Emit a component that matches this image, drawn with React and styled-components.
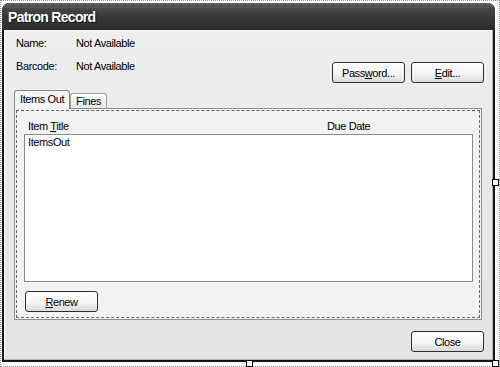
import styled, { createGlobalStyle } from "styled-components";

const GlobalStyle = createGlobalStyle`
  html, body {
    margin: 0;
    padding: 0;
    background: #ffffff;
  }
  body {
    font-family: "Liberation Sans", Arial, sans-serif;
  }
`;

const App = () => {
  return (
    <>
      <GlobalStyle />
      <Page>
        <Window>
          <TitleBar>Patron Record</TitleBar>
          <Client>
            <InfoBar>
              <Fields>
                <Text>Name:</Text>
                <Text>Not Available</Text>
                <Text>Barcode:</Text>
                <Text>Not Available</Text>
              </Fields>
              <ButtonGroup>
                <Button>
                  Pass<Key>w</Key>ord...
                </Button>
                <Button>
                  <Key>E</Key>dit...
                </Button>
              </ButtonGroup>
            </InfoBar>

            <Tabs>
              <TabStrip>
                <Tab $active>Items Out</Tab>
                <Tab>Fines</Tab>
              </TabStrip>
              <TabPanel>
                <FocusBox>
                  <ColumnHeads>
                    <Text>
                      Item <Key>T</Key>itle
                    </Text>
                    <Text>Due Date</Text>
                  </ColumnHeads>
                  <ListBox>
                    <ListItem>ItemsOut</ListItem>
                  </ListBox>
                  <RenewRow>
                    <Button>
                      <Key>R</Key>enew
                    </Button>
                  </RenewRow>
                </FocusBox>
              </TabPanel>
            </Tabs>

            <Footer>
              <Button>Close</Button>
            </Footer>
          </Client>
        </Window>

        <Handle $x={491} $y={178} />
        <Handle $x={245} $y={359} />
        <Handle $x={491} $y={359} />
      </Page>
    </>
  );
};

export default App;

const Page = styled.div`
  position: relative;
  box-sizing: border-box;
  width: 500px;
  height: 367px;
  border: 1px dotted #8c8c8c;
  padding: 2px 4px 4px 1px;
  display: flex;
`;

const Window = styled.div`
  flex: 1;
  display: flex;
  flex-direction: column;
  background: #151515;
  border-radius: 7px 7px 0 0;
  overflow: hidden;
`;

const TitleBar = styled.div`
  height: 27px;
  flex-shrink: 0;
  display: flex;
  align-items: center;
  padding-left: 6px;
  background: linear-gradient(to bottom, #626262 0%, #444444 25%, #363636 60%, #2b2b2b 100%);
  color: #ffffff;
  font-size: 14px;
  font-weight: bold;
  letter-spacing: -0.7px;
  text-shadow: 1px 1px 0 #111;
`;

const Client = styled.div`
  flex: 1;
  display: flex;
  flex-direction: column;
  margin: 0 2px 2px 2px;
  border: 1px solid;
  border-color: #f7f7f7 #b4b4b4 #b4b4b4 #f7f7f7;
  background: linear-gradient(to bottom, #eeeeee, #e3e3e3);
`;

const Text = styled.span`
  font-size: 11px;
  line-height: 13px;
  letter-spacing: -0.4px;
  color: #000;
  white-space: nowrap;
`;

const Key = styled.span`
  text-decoration: underline;
`;

const InfoBar = styled.div`
  display: flex;
  justify-content: space-between;
  align-items: flex-start;
  padding: 6px 8px 0 11px;
`;

const Fields = styled.div`
  display: grid;
  grid-template-columns: 60px auto;
  row-gap: 10px;
`;

const ButtonGroup = styled.div`
  display: flex;
  gap: 6px;
  margin-top: 25px;
`;

const Button = styled.button`
  box-sizing: border-box;
  width: 73px;
  height: 21px;
  padding: 0;
  border: 1px solid #2e2e2e;
  border-radius: 3px;
  background: linear-gradient(to bottom, #ffffff 0%, #f4f4f4 55%, #dadada 100%);
  font-family: "Liberation Sans", Arial, sans-serif;
  font-size: 11px;
  letter-spacing: -0.4px;
  color: #000;
`;

const Tabs = styled.div`
  flex: 1;
  display: flex;
  flex-direction: column;
  margin: 7px 10px 0 9px;
`;

const TabStrip = styled.div`
  display: flex;
  align-items: flex-end;
  height: 18px;
`;

const Tab = styled.div`
  position: relative;
  z-index: ${(p) => (p.$active ? 2 : 1)};
  box-sizing: border-box;
  height: ${(p) => (p.$active ? "19px" : "15px")};
  margin-bottom: ${(p) => (p.$active ? "-1px" : "0")};
  padding: ${(p) => (p.$active ? "2px 5px 0" : "1px 5px 0")};
  border: 1px solid ${(p) => (p.$active ? "#8a8a8a" : "#a0a0a0")};
  border-bottom: none;
  border-radius: 3px 3px 0 0;
  background: ${(p) =>
    p.$active ? "#f4f4f4" : "linear-gradient(to bottom, #ffffff, #e6e6e6)"};
  font-size: 11px;
  line-height: 13px;
  letter-spacing: -0.4px;
  color: #000;
`;

const TabPanel = styled.div`
  flex: 1;
  display: flex;
  padding: 1px;
  border: 1px solid #8f8f8f;
  background: #f2f2f2;
`;

const FocusBox = styled.div`
  flex: 1;
  display: flex;
  flex-direction: column;
  border: 1px dashed #6a6a6a;
  padding: 7px 6px 5px 7px;
`;

const ColumnHeads = styled.div`
  display: grid;
  grid-template-columns: 299px 1fr;
  height: 16px;
  align-items: center;
  padding-left: 4px;
`;

const ListBox = styled.div`
  flex: 1;
  border: 1px solid #8a8a8a;
  background: #ffffff;
  padding: 1px 3px;
`;

const ListItem = styled.div`
  font-size: 11px;
  line-height: 13px;
  letter-spacing: -0.4px;
  color: #000;
`;

const RenewRow = styled.div`
  display: flex;
  padding: 9px 0 0 1px;
`;

const Footer = styled.div`
  display: flex;
  justify-content: flex-end;
  padding: 11px 8px 7px;
`;

const Handle = styled.div`
  position: absolute;
  left: ${(p) => p.$x}px;
  top: ${(p) => p.$y}px;
  box-sizing: border-box;
  width: 7px;
  height: 7px;
  border: 1px solid #000;
  background: #ffffff;
`;
